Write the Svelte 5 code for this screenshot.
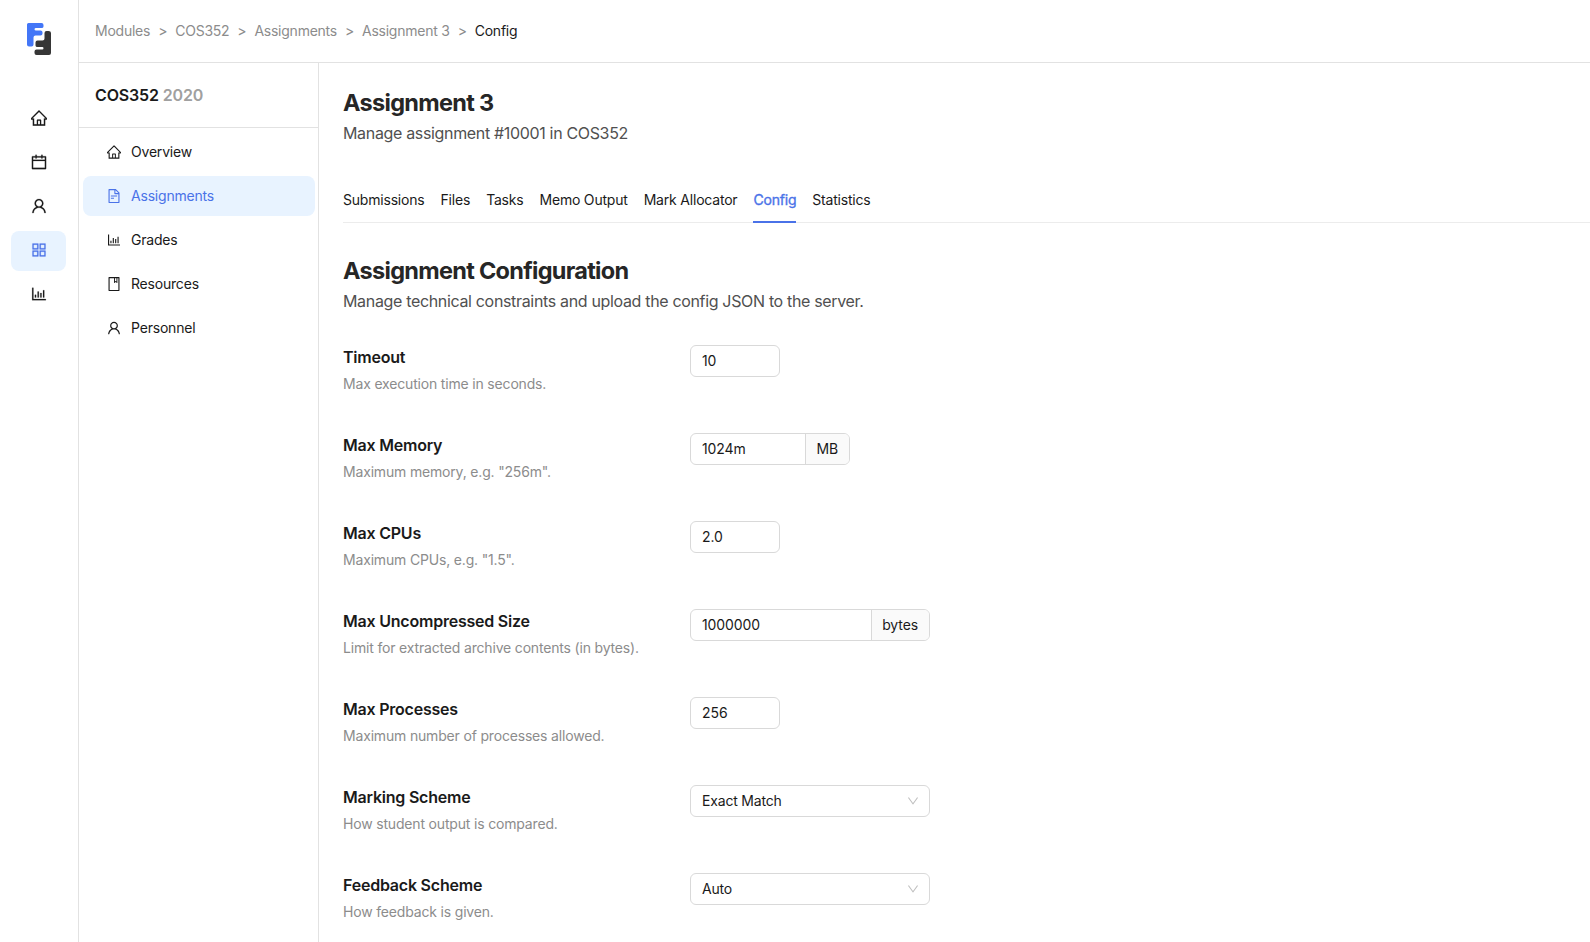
<script>
  const icons = {
    home: 'M946.5 505L560.1 118.8l-25.9-25.9a31.5 31.5 0 00-44.4 0L77.5 505a63.9 63.9 0 00-18.8 46c.4 35.2 29.7 63.3 64.9 63.3h42.5V940h691.8V614.3h43.4c17.1 0 33.2-6.7 45.3-18.8a63.6 63.6 0 0018.7-45.3c0-17-6.7-33.1-18.8-45.2zM568 868H456V664h112v204zm217.9-325.7V868H632V640c0-22.1-17.9-40-40-40H432c-22.1 0-40 17.9-40 40v228H238.1V542.3h-96l370-369.7 23.1 23.1L882 542.3h-96.1z',
    calendar: 'M880 184H712v-64c0-4.4-3.6-8-8-8h-56c-4.4 0-8 3.6-8 8v64H384v-64c0-4.4-3.6-8-8-8h-56c-4.4 0-8 3.6-8 8v64H144c-17.7 0-32 14.3-32 32v664c0 17.7 14.3 32 32 32h736c17.7 0 32-14.3 32-32V216c0-17.7-14.3-32-32-32zm-40 656H184V460h656v380zM184 392V256h128v48c0 4.4 3.6 8 8 8h56c4.4 0 8-3.6 8-8v-48h256v48c0 4.4 3.6 8 8 8h56c4.4 0 8-3.6 8-8v-48h128v136H184z',
    user: 'M858.5 763.6a374 374 0 00-80.6-119.5 375.63 375.63 0 00-119.5-80.6c-.4-.2-.8-.3-1.2-.5C719.5 518 760 444.7 760 362c0-137-111-248-248-248S264 225 264 362c0 82.7 40.5 156 102.8 201.1-.4.2-.8.3-1.2.5-44.8 18.9-85 46-119.5 80.6a375.63 375.63 0 00-80.6 119.5A371.7 371.7 0 00136 901.8a8 8 0 008 8.2h60c4.4 0 7.9-3.5 8-7.8 2-77.2 33-149.5 87.8-204.3 56.7-56.7 132-87.9 212.2-87.9s155.5 31.2 212.2 87.9C779 752.7 810 825 812 902.2c.1 4.4 3.6 7.8 8 7.8h60a8 8 0 008-8.2c-1-47.8-10.9-94.3-29.5-138.2zM512 534c-45.9 0-89.1-17.9-121.6-50.4S340 407.9 340 362c0-45.9 17.9-89.1 50.4-121.6S466.1 190 512 190s89.1 17.9 121.6 50.4S684 316.1 684 362c0 45.9-17.9 89.1-50.4 121.6S557.9 534 512 534z',
    grid: 'M464 144H160c-8.8 0-16 7.2-16 16v304c0 8.8 7.2 16 16 16h304c8.8 0 16-7.2 16-16V160c0-8.8-7.2-16-16-16zm-52 268H212V212h200v200zm452-268H560c-8.8 0-16 7.2-16 16v304c0 8.8 7.2 16 16 16h304c8.8 0 16-7.2 16-16V160c0-8.8-7.2-16-16-16zm-52 268H612V212h200v200zM464 544H160c-8.8 0-16 7.2-16 16v304c0 8.8 7.2 16 16 16h304c8.8 0 16-7.2 16-16V560c0-8.8-7.2-16-16-16zm-52 268H212V612h200v200zm452-268H560c-8.8 0-16 7.2-16 16v304c0 8.8 7.2 16 16 16h304c8.8 0 16-7.2 16-16V560c0-8.8-7.2-16-16-16zm-52 268H612V612h200v200z',
    chart: 'M888 792H200V168c0-4.4-3.6-8-8-8h-56c-4.4 0-8 3.6-8 8v688c0 4.4 3.6 8 8 8h752c4.4 0 8-3.6 8-8v-56c0-4.4-3.6-8-8-8zm-600-80h56c4.4 0 8-3.6 8-8V560c0-4.4-3.6-8-8-8h-56c-4.4 0-8 3.6-8 8v144c0 4.4 3.6 8 8 8zm152 0h56c4.4 0 8-3.6 8-8V384c0-4.4-3.6-8-8-8h-56c-4.4 0-8 3.6-8 8v320c0 4.4 3.6 8 8 8zm152 0h56c4.4 0 8-3.6 8-8V462c0-4.4-3.6-8-8-8h-56c-4.4 0-8 3.6-8 8v242c0 4.4 3.6 8 8 8zm152 0h56c4.4 0 8-3.6 8-8V304c0-4.4-3.6-8-8-8h-56c-4.4 0-8 3.6-8 8v400c0 4.4 3.6 8 8 8z',
    file: 'M854.6 288.6L639.4 73.4c-6-6-14.1-9.4-22.6-9.4H192c-17.7 0-32 14.3-32 32v832c0 17.7 14.3 32 32 32h640c17.7 0 32-14.3 32-32V311.3c0-8.5-3.4-16.7-9.4-22.7zM790.2 326H602V137.8L790.2 326zm1.8 562H232V136h302v216a42 42 0 0042 42h216v494zM504 618H320c-4.4 0-8 3.6-8 8v48c0 4.4 3.6 8 8 8h184c4.4 0 8-3.6 8-8v-48c0-4.4-3.6-8-8-8zM312 490v48c0 4.4 3.6 8 8 8h384c4.4 0 8-3.6 8-8v-48c0-4.4-3.6-8-8-8H320c-4.4 0-8 3.6-8 8z',
    book: 'M832 64H192c-17.7 0-32 14.3-32 32v832c0 17.7 14.3 32 32 32h640c17.7 0 32-14.3 32-32V96c0-17.7-14.3-32-32-32zm-260 72h96v209.9L621.5 312 572 347.4V136zm220 752H232V136h280v296.9c0 3.3 1 6.6 3 9.3a15.9 15.9 0 0022.3 3.7l83.8-59.9 81.4 59.4c2.7 2 6 3.1 9.4 3.1 8.8 0 16-7.2 16-16V136h64v752z',
    down: 'M884 256h-75c-5.1 0-9.9 2.5-12.9 6.6L512 654.2 227.9 262.6c-3-4.1-7.8-6.6-12.9-6.6h-75c-6.5 0-10.3 7.4-6.5 12.7l352.6 486.1c12.8 17.6 39 17.6 51.7 0l352.6-486.1c3.9-5.3.1-12.7-6.4-12.7z'
  };
  const rail = ['home', 'calendar', 'user', 'grid', 'chart'];
  const crumbs = ['Modules', 'COS352', 'Assignments', 'Assignment 3', 'Config'];
  const menu = [
    ['home', 'Overview'],
    ['file', 'Assignments'],
    ['chart', 'Grades'],
    ['book', 'Resources'],
    ['user', 'Personnel']
  ];
  const tabs = ['Submissions', 'Files', 'Tasks', 'Memo Output', 'Mark Allocator', 'Config', 'Statistics'];
  const settings = [
    { label: 'Timeout', hint: 'Max execution time in seconds.', value: '10', width: 90 },
    { label: 'Max Memory', hint: 'Maximum memory, e.g. "256m".', value: '1024m', unit: 'MB', width: 160 },
    { label: 'Max CPUs', hint: 'Maximum CPUs, e.g. "1.5".', value: '2.0', width: 90 },
    { label: 'Max Uncompressed Size', hint: 'Limit for extracted archive contents (in bytes).', value: '1000000', unit: 'bytes', width: 240 },
    { label: 'Max Processes', hint: 'Maximum number of processes allowed.', value: '256', width: 90 },
    { label: 'Marking Scheme', hint: 'How student output is compared.', value: 'Exact Match', select: true, width: 240 },
    { label: 'Feedback Scheme', hint: 'How feedback is given.', value: 'Auto', select: true, width: 240 }
  ];
</script>

{#snippet icon(name, size)}
  <svg class="icon" viewBox="64 64 896 896" width={size} height={size} fill="currentColor" aria-hidden="true"><path d={icons[name]} /></svg>
{/snippet}

<div class="app">
  <aside class="rail">
    <svg class="logo" viewBox="0 0 26 34" width="26" height="34" aria-hidden="true">
      <path fill="#4376f7" d="M2.500 1H15.500Q17.500 1 17.500 3V4.500Q17.500 6 15.500 6H10Q8.500 6 8.500 7.200Q8.500 8.500 10 8.500H14.500Q16.500 8.500 16.500 10.200V11.500Q16.500 13.500 14.500 13.500H9.500Q7.500 13.500 7.500 15.500V22.500Q7.500 24.500 5.500 24.500H3Q1 24.500 1 22.500V2.500Q1 1 2.500 1Z" />
      <path fill="#363636" d="M20.500 9H22.500Q25 9 25 11V31Q25 33 23 33H10.500Q8.500 33 8.500 31V29.500Q8.500 27.500 10.500 27.500H16.300Q17.500 27.500 17.500 26.300Q17.500 25 16.300 25H11.500Q9.500 25 9.500 23.500V20.500Q9.500 18.500 11.500 18.500H16.500Q18.500 18.500 18.500 16.500V11Q18.500 9 20.500 9Z" />
    </svg>
    <nav>
      {#each rail as name}
        <a class:active={name === 'grid'}>{@render icon(name, 16)}</a>
      {/each}
    </nav>
  </aside>

  <div class="main">
    <header class="crumbs">
      {#each crumbs as crumb, i}
        {#if i}<span class="sep">&gt;</span>{/if}
        <span class:current={i === crumbs.length - 1}>{crumb}</span>
      {/each}
    </header>

    <div class="body">
      <aside class="panel">
        <div class="module"><span>COS352 <em>2020</em></span></div>
        <nav>
          {#each menu as [name, label]}
            <a class:active={label === 'Assignments'}>{@render icon(name, 14)}<span>{label}</span></a>
          {/each}
        </nav>
      </aside>

      <main>
        <h1>Assignment 3</h1>
        <p class="lead">Manage assignment #10001 in COS352</p>
        <div class="tabs">
          {#each tabs as tab}
            <div class="tab" class:active={tab === 'Config'}>{tab}</div>
          {/each}
        </div>
        <h1>Assignment Configuration</h1>
        <p class="lead">Manage technical constraints and upload the config JSON to the server.</p>
        <div class="settings">
          {#each settings as s}
            <div class="setting">
              <div class="about">
                <div class="label">{s.label}</div>
                <div class="hint">{s.hint}</div>
              </div>
              <div class="field" style="width: {s.width}px">
                <span class="value" class:text={s.select}>{s.value}</span>
                {#if s.unit}<span class="unit">{s.unit}</span>{/if}
                {#if s.select}<span class="arrow">{@render icon('down', 12)}</span>{/if}
              </div>
            </div>
          {/each}
        </div>
      </main>
    </div>
  </div>
</div>

<style>
  :global(body) { margin: 0; background: #fff; overflow: hidden; }
  .app { display: flex; height: 942px; overflow: hidden; font: 14px/22px Inter, sans-serif; letter-spacing: -.2px; color: #1a1a1a; }
  .app * { box-sizing: border-box; }
  .icon { display: block; flex: none; }
  .rail { width: 79px; flex: none; border-right: 1px solid #e2e2e2; display: flex; flex-direction: column; }
  .logo { margin: 22px 0 0 26px; flex: none; }
  .rail nav { display: flex; flex-direction: column; gap: 4px; margin: 43px 12px 0 11px; }
  .rail a { height: 40px; display: flex; align-items: center; justify-content: center; padding-bottom: 2px; border-radius: 8px; }
  .rail .icon { stroke: currentColor; stroke-width: 10; }
  a.active { background: #e8f3ff; color: #4a72e8; }
  .main { flex: 1; min-width: 0; display: flex; flex-direction: column; }
  .crumbs { height: 63px; flex: none; display: flex; align-items: center; padding: 0 16px; border-bottom: 1px solid #e2e2e2; color: #8c8c8c; letter-spacing: -.24px; white-space: nowrap; }
  .sep { margin: 0 8px; }
  .current { color: #1a1a1a; }
  .body { flex: 1; min-height: 0; display: flex; }
  .panel { width: 240px; flex: none; border-right: 1px solid #e2e2e2; }
  .module { height: 65px; display: flex; align-items: center; padding: 0 16px; border-bottom: 1px solid #e2e2e2; font-size: 16px; font-weight: 600; letter-spacing: -.14px; }
  .module em { font-style: normal; color: #a0a0a0; }
  .panel nav { display: flex; flex-direction: column; gap: 4px; padding: 4px 3.5px 4px 4px; }
  .panel a { height: 40px; display: flex; align-items: center; gap: 10px; padding-left: 24px; border-radius: 8px; }
  main { flex: 1; min-width: 0; padding: 24px 0 0 24px; }
  h1 { margin: 0; font-size: 23.5px; line-height: 32px; font-weight: 650; letter-spacing: -.71px; color: #262626; }
  .lead { margin: 2px 0 0; font-size: 16px; line-height: 24px; letter-spacing: -.335px; color: #505050; }
  .tabs { display: flex; gap: 16px; margin: 34px 0 32px; height: 44px; border-bottom: 1px solid #ececec; }
  .tab { height: 44px; padding-top: 10px; white-space: nowrap; }
  .tab.active { color: #4a72e8; -webkit-text-stroke: .35px currentColor; border-bottom: 2px solid #4a72e8; }
  .settings { margin-top: 32px; }
  .setting { height: 88px; display: flex; align-items: flex-start; }
  .about { width: 347px; flex: none; }
  .label { font-size: 16px; line-height: 24px; font-weight: 600; letter-spacing: -.22px; }
  .hint { margin-top: 5px; line-height: 20px; letter-spacing: -.175px; color: #8c8c8c; }
  .field { height: 32px; display: flex; border: 1px solid #d9d9d9; border-radius: 6px; overflow: hidden; line-height: 30px; letter-spacing: -.08px; }
  .value { flex: 1; padding-left: 11px; }
  .text { letter-spacing: -.18px; }
  .unit { padding: 0 11px 0 10.5px; letter-spacing: -.1px; background: #fafafa; border-left: 1px solid #d9d9d9; }
  .arrow { display: flex; align-items: center; padding-right: 10px; color: #bfbfbf; }
</style>
